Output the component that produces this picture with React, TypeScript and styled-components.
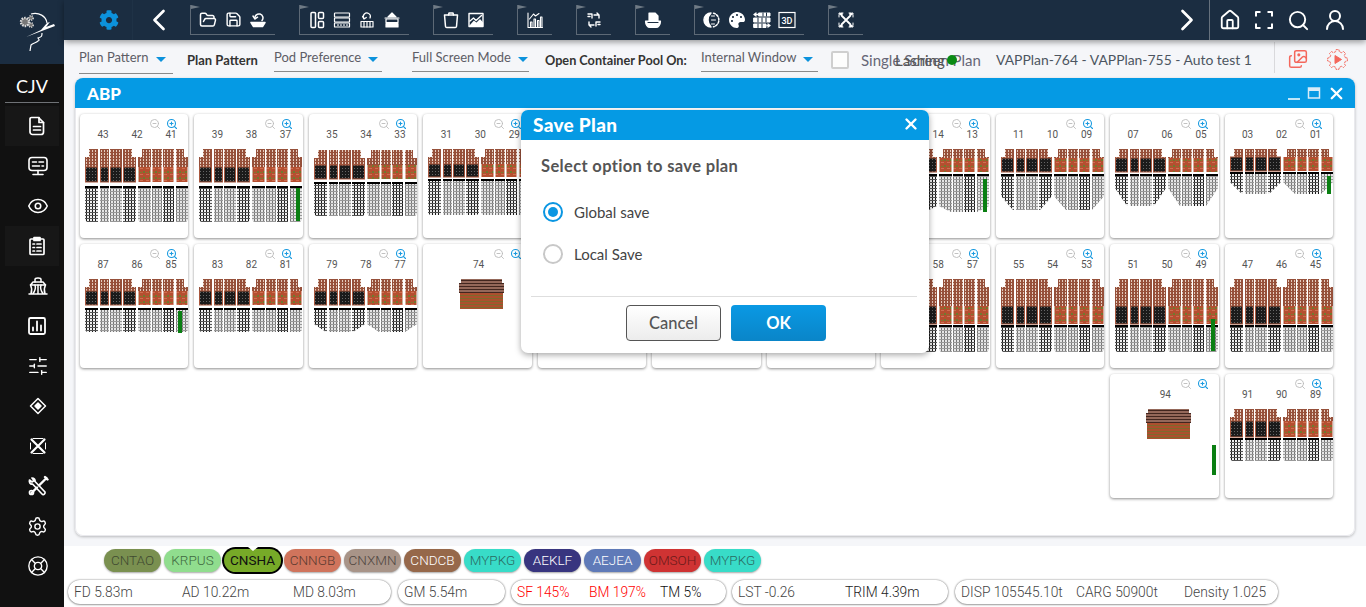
import React from "react";
import styled, { createGlobalStyle } from "styled-components";
import { ChevronLeft, ChevronRight, Eye, FolderOpen, Home, Images, LifeBuoy, Save, Search, Settings, SlidersHorizontal, UserRound, X, ZoomIn, ZoomOut } from "lucide-react";
import { FaCog, FaPalette } from "react-icons/fa";

const Global = createGlobalStyle`
  html, body { margin: 0; padding: 0; width: 1366px; height: 607px; overflow: hidden; background: #f5f6f9; }
  body { font-family: "Lato", "Open Sans", sans-serif; color: #555; }
  * { box-sizing: border-box; }
`;

const Page = styled.div`
  position: relative;
  display: flex;
  width: 1366px;
  height: 607px;
  overflow: hidden;
`;
const Sidebar = styled.aside`
  width: 64px;
  flex: none;
  background: #111;
  display: flex;
  flex-direction: column;
  align-items: stretch;
`;
const LogoBox = styled.div`
  height: 64px;
  background: #1b2d41;
  display: flex;
  align-items: center;
  justify-content: center;
  padding-left: 10px;
`;
const Vessel = styled.div`
  margin: 0 5px;
  height: 39px;
  border-bottom: 1px solid #6f7276;
  color: #fff;
  font-size: 18px;
  text-align: center;
  line-height: 45px;
`;
const SideItem = styled.div<{ $active?: boolean }>`
  height: 40px;
  margin: 0 5px;
  padding-left: 22px;
  display: flex;
  align-items: center;
  background: ${(p) => (p.$active ? "#171717" : "transparent")};
`;
const SideList = styled.nav`
  padding-top: 3px;
  display: flex;
  flex-direction: column;
`;
const Main = styled.main`
  flex: 1;
  min-width: 0;
  display: flex;
  flex-direction: column;
`;
const TopBar = styled.header`
  height: 40px;
  flex: none;
  background: #1b2d41;
  display: flex;
  align-items: center;
  box-shadow: 0 2px 6px rgba(0, 0, 0, .4);
  position: relative;
  z-index: 2;
`;
const GearSlot = styled.div`
  width: 69px;
  height: 40px;
  padding-left: 35px;
  display: flex;
  align-items: center;
  border-right: 1px solid #1f3246;
`;
const BackSlot = styled.div`
  width: 57px;
  padding-left: 8px;
  display: flex;
  align-items: center;
`;
const Groups = styled.div`
  display: flex;
  gap: 24px;
  align-self: flex-start;
  padding-top: 5px;
`;
const Group = styled.div`
  position: relative;
  height: 30px;
  padding: 0 8px 0 8px;
  display: flex;
  gap: 7px;
  align-items: center;
  border-left: 1px solid #5d6976;
  border-bottom: 1px solid #5d6976;
  &::before {
    content: "";
    position: absolute;
    left: 0;
    top: 0;
    border-left: 9px solid #6f7a85;
    border-top: 2.5px solid transparent;
    border-bottom: 2.5px solid transparent;
  }
`;
const IconSlot = styled.span`
  width: 18px;
  height: 18px;
  display: flex;
  align-items: center;
  justify-content: center;
`;
const TopRight = styled.div`
  margin-left: auto;
  display: flex;
  align-items: center;
  height: 40px;
`;
const ForwardSlot = styled.div`
  width: 40px;
  display: flex;
  align-items: center;
`;
const RightIcons = styled.div`
  height: 40px;
  width: 157px;
  padding-left: 9px;
  border-left: 1px solid #66717d;
  display: flex;
  align-items: center;
  gap: 13px;
`;
const SubBar = styled.div`
  height: 38px;
  flex: none;
  display: flex;
  align-items: flex-start;
  background: #f5f6f9;
`;
const Select = styled.div<{ $w: number; $ml: number; $tall?: boolean }>`
  width: ${(p) => p.$w}px;
  margin-left: ${(p) => p.$ml}px;
  margin-top: 7px;
  height: ${(p) => (p.$tall ? 27 : 25)}px;
  border-bottom: 1px solid #8a8a8a;
  font-size: 13px;
  line-height: 20px;
  color: #5d5d66;
  white-space: nowrap;
  display: flex;
  &::after {
    content: "";
    margin-left: 7px;
    margin-top: 10px;
    width: 0;
    height: 0;
    border-left: 5px solid transparent;
    border-right: 5px solid transparent;
    border-top: 5px solid #0c92dc;
  }
`;
const BoldLabel = styled.div<{ $ml: number; $w: number; $fs: number }>`
  margin-left: ${(p) => p.$ml}px;
  width: ${(p) => p.$w}px;
  margin-top: 11px;
  font-size: ${(p) => p.$fs}px;
  line-height: 18px;
  font-weight: 700;
  color: #333;
  white-space: nowrap;
`;
const Check = styled.div`
  width: 18px;
  height: 18px;
  margin-left: 13px;
  margin-top: 11px;
  border: 2px solid #cfcfcf;
  border-radius: 2px;
  background: #fdfdfd;
`;
const SinglePlan = styled.div`
  position: relative;
  width: 121px;
  margin-left: 12px;
  margin-top: 10px;
  font-size: 15px;
  line-height: 20px;
  color: #667;
  white-space: nowrap;
`;
const LashBadge = styled.div`
  position: absolute;
  left: 34px;
  top: 0;
  display: flex;
  align-items: center;
  gap: 1px;
  color: #555;
  font-size: 15px;
  &::after {
    content: "";
    width: 10px;
    height: 10px;
    border-radius: 50%;
    background: #0a8a14;
    margin-left: 1px;
  }
`;
const PlanName = styled.div`
  margin-left: 14px;
  margin-top: 10px;
  width: 278px;
  font-size: 13.9px;
  line-height: 20px;
  color: #4c5560;
  white-space: nowrap;
`;
const ActionBox = styled.div`
  height: 31px;
  margin-top: 2px;
  border-left: 1px solid #d9d9dc;
  padding: 7px 0 0 13px;
  display: flex;
  gap: 19px;
`;
const WindowArea = styled.div`
  flex: none;
  height: 468px;
  padding: 0 11px;
`;
const Win = styled.section`
  height: 458px;
  background: #fff;
  border-radius: 8px;
  box-shadow: 0 1px 3px rgba(0, 0, 0, .25), 0 0 0 1px #e9e9ed inset;
  overflow: hidden;
  display: flex;
  flex-direction: column;
`;
const WinHead = styled.div`
  height: 30px;
  flex: none;
  background: #059ae4;
  display: flex;
  align-items: center;
  justify-content: space-between;
  padding: 0 9px 0 12px;
  color: #fff;
  font-size: 17px;
  font-weight: 900;
`;
const WinControls = styled.div`
  display: flex;
  align-items: center;
  gap: 6px;
`;
const Bays = styled.div`
  display: grid;
  grid-template-columns: repeat(11, 1fr);
  grid-auto-rows: 124px;
  gap: 6px;
  width: 1258px;
  padding: 6px 0 0 5px;
`;
const Card = styled.article<{ $col?: number }>`
  position: relative;
  background: #fff;
  border-radius: 4px;
  box-shadow: 0 1px 3px rgba(0, 0, 0, .45);
  overflow: hidden;
  ${(p) => (p.$col ? `grid-column: ${p.$col};` : "")}
`;
const ZoomRow = styled.div`
  height: 15px;
  padding: 4px 10px 0 0;
  display: flex;
  justify-content: flex-end;
  gap: 5px;
`;
const Labels = styled.div<{ $single?: boolean }>`
  height: 11px;
  padding-left: ${(p) => (p.$single ? 2 : 6)}px;
  display: flex;
  justify-content: ${(p) => (p.$single ? "center" : "flex-start")};
  font-family: "Roboto", sans-serif;
  font-size: 10px;
  line-height: 11px;
  color: #555;
  span { width: 34px; text-align: center; }
`;
const Footer = styled.footer`
  flex: 1;
  background: #fff;
  position: relative;
  font-family: "Roboto", sans-serif;
`;
const Chips = styled.div`
  display: flex;
  gap: 3px;
  padding: 3px 0 0 40px;
  height: 34px;
`;
const Chip = styled.div<{ $bg: string; $fg: string; $on?: boolean }>`
  position: relative;
  width: 57px;
  height: 23px;
  border-radius: 12px;
  background: ${(p) => p.$bg};
  color: ${(p) => p.$fg};
  font-size: 13.5px;
  font-weight: ${(p) => (p.$on ? 400 : 300)};
  line-height: 23px;
  text-align: center;
  box-shadow: ${(p) => (p.$on ? "0 0 0 2px #000" : "0 1px 2px rgba(0,0,0,.35)")};
  white-space: nowrap;
  ${(p) =>
    p.$on
      ? `&::before { content: ""; position: absolute; left: 24px; top: -2px; border-left: 5px solid transparent; border-right: 5px solid transparent; border-top: 4px solid #fff; }`
      : ""}
`;
const Stats = styled.div`
  display: flex;
  padding-left: 4px;
`;
const Pill = styled.div<{ $w: number; $ml?: number }>`
  width: ${(p) => p.$w}px;
  margin-left: ${(p) => p.$ml ?? 0}px;
  height: 24px;
  border-radius: 12px;
  background: #fff;
  box-shadow: 0 0 2px rgba(0, 0, 0, .55), 0 1px 2px rgba(0, 0, 0, .25);
  padding-left: 6px;
  display: flex;
  align-items: center;
  font-size: 13.8px;
  font-weight: 300;
  color: #444;
  white-space: nowrap;
`;
const Stat = styled.span<{ $w: number; $c?: string }>`
  width: ${(p) => p.$w}px;
  color: ${(p) => p.$c ?? "inherit"};
`;
const Dialog = styled.div`
  position: absolute;
  left: 521px;
  top: 110px;
  width: 408px;
  height: 243px;
  background: #fff;
  border-radius: 7px;
  box-shadow: 0 2px 6px rgba(0, 0, 0, .35);
  overflow: hidden;
  z-index: 5;
`;
const DlgHead = styled.div`
  height: 30px;
  background: #059ae4;
  color: #fff;
  padding: 0 9px 2px 12px;
  display: flex;
  align-items: center;
  justify-content: space-between;
  font-size: 19px;
  font-weight: 900;
  letter-spacing: .3px;
`;
const DlgTitle = styled.div`
  padding: 16px 0 0 20px;
  height: 51px;
  font-size: 16.5px;
  line-height: 20px;
  font-weight: 700;
  letter-spacing: .35px;
  color: #555;
  white-space: nowrap;
`;
const RadioRow = styled.label`
  display: flex;
  align-items: center;
  gap: 11px;
  height: 42px;
  padding-left: 22px;
  font-size: 15px;
  color: #444;
`;
const RadioDot = styled.span<{ $on?: boolean }>`
  width: 20px;
  height: 20px;
  border-radius: 50%;
  border: 2px solid ${(p) => (p.$on ? "#0a96e2" : "#c8c8c8")};
  display: flex;
  align-items: center;
  justify-content: center;
  &::after {
    content: "";
    width: 10px;
    height: 10px;
    border-radius: 50%;
    background: ${(p) => (p.$on ? "#0a96e2" : "transparent")};
  }
`;
const DlgFoot = styled.div`
  margin: 21px 12px 0 10px;
  border-top: 1px solid #dedede;
  padding: 8px 0 0 95px;
  display: flex;
  gap: 10px;
`;
const Btn = styled.button<{ $primary?: boolean }>`
  width: 95px;
  height: 36px;
  border-radius: 4px;
  font-family: inherit;
  font-size: 16.5px;
  font-weight: ${(p) => (p.$primary ? 700 : 500)};
  color: ${(p) => (p.$primary ? "#fff" : "#555")};
  border: ${(p) => (p.$primary ? "0" : "1px solid #555")};
  background: ${(p) => (p.$primary ? "linear-gradient(#0a99e4,#0a85c8)" : "linear-gradient(#fff,#ececec)")};
`;

/* ---------- icons ---------- */
const Svg: React.FC<{ s?: number; v?: number; sw?: number; c?: string; children: React.ReactNode }> = ({ s = 18, v = 18, sw = 1.5, c = "#fff", children }) => (
  <svg width={s} height={s} viewBox={`0 0 ${v} ${v}`} fill="none" stroke={c} strokeWidth={sw} strokeLinecap="round" strokeLinejoin="round">{children}</svg>
);

const topIcons: Record<string, React.ReactNode> = {
  open: <FolderOpen size={18} color="#fff" strokeWidth={2} />,
  save: <Save size={17} color="#fff" strokeWidth={2} />,
  shipUndo: <Svg><path d="M6 7.500A4 4 0 1 1 13 9.500" /><path d="M4 5 6 8l2.500-1.800" /><path d="M2 11.500h14l-2.500 4h-9z" fill="#fff" /></Svg>,
  layout: <Svg><rect x="3" y="1.500" width="4.500" height="15" rx="1" /><rect x="10.500" y="1.500" width="5" height="6" rx="1" /><rect x="10.500" y="10.500" width="5" height="6" rx="1" /></Svg>,
  rows: <Svg sw={1.200}><rect x="1.500" y="2" width="15" height="4" rx=".6" /><rect x="1.500" y="7" width="15" height="4" rx=".6" /><rect x="1.500" y="12" width="15" height="4" rx=".6" /><path d="M5 13.500v1M8 13.500v1M11 13.500v1M14 13.500v1" /></Svg>,
  undoGrid: <Svg sw={1.200}><path d="M6 7.500A3.500 3.500 0 1 1 12 7" /><path d="M4.500 5.500 6 8l2.300-1.600" /><rect x="3" y="10.500" width="12" height="5.500" /><path d="M6 10.500v5.500M9 10.500v5.500M12 10.500v5.500" /></Svg>,
  stack: <Svg sw={1.200}><path d="M9 2 13 6H5z" fill="#fff" /><rect x="3" y="8" width="12" height="3.500" /><rect x="3" y="12.500" width="12" height="3.500" fill="#fff" /><path d="M2 7h14" /></Svg>,
  bucket: <Svg><path d="M2.500 4h13l-1 11.500a1.200 1.200 0 0 1-1.200 1H4.700a1.200 1.200 0 0 1-1.200-1z" /><path d="M6.500 4 7 2h4l.5 2" /></Svg>,
  imgChart: <Svg sw={1.400}><rect x="2" y="2.500" width="14" height="13" /><path d="m3 10 3.500-3 2.500 2.500 5.500-5" /><path d="M3 15 7 10.500l2.500 2 3.500-3.500 2.500 3v3z" fill="#fff" /></Svg>,
  barArrow: <Svg sw={1.100}><path d="M2 2v14.500h14.500" /><path d="M4.500 15.500V11h1.500v4.500M8 15.500V8h1.500v7.500M11.500 15.500V9.500H13v6M14.500 15.500V6H16v9.500" /><path d="m3.500 8 4-5 2 2L13 2.500" /></Svg>,
  transfer: <Svg sw={1.400}><path d="M3 3h4v4M3 5.500h2" /><path d="M9 4h5l-2-2M14 4v3" /><path d="M15 11h-4v4M15 13.500h-2" /><path d="M9 14H4l2 2M4 14v-3" /></Svg>,
  docShip: <Svg sw={1.200}><path d="M5 2h6l3 3v5H5z" fill="#fff" /><path d="M1.500 10h15c0 3.500-2 6.500-4.500 6.500H6c-2.500 0-4.500-3-4.500-6.500z" fill="#fff" /><path d="M4 11.500h10" stroke="#1b2d41" /></Svg>,
  half: <Svg sw={1.500}><path d="M8 2a7 7 0 0 0 0 14c-2-2-3-4.500-3-7s1-5 3-7z" fill="#fff" /><path d="M10.500 2.200a7 7 0 0 1 0 13.600" strokeDasharray="2 1.500" /><path d="M8.500 5h3M8.500 9h4M8.500 13h3" strokeWidth={1} /></Svg>,
  palette: <FaPalette size={16} color="#fff" />,
  grid: <Svg sw={1}><path d="M6 2h11v3H6zM1 7h16v4H1zM1 13h12v3.500H1z" fill="#fff" /><path d="M1 3.500h4M3 2 1 3.500 3 5M17 14.500h-3M15 13l2 1.500L15 16" strokeWidth={1.300} /><path d="M5 7v4M9 7v4M13 7v4M5 13v3.500M9 13v3.500M10 2v3M13.500 2v3" stroke="#1b2d41" /></Svg>,
  td: <svg width="18" height="18" viewBox="0 0 18 18"><rect x="1" y="1.500" width="16" height="15" fill="none" stroke="#fff" strokeWidth="1.200" /><text x="9" y="12.500" textAnchor="middle" fontSize="9" fontFamily="Roboto, sans-serif" fontWeight="500" fill="#fff">3D</text></svg>,
  cross: <Svg sw={1.300}><path d="M4.500 4.500l9 9M13.500 4.500l-9 9" strokeWidth={1.800} /><path d="M2 6V2h4M12 2h4v4M2 12v4h4M12 16h4v-4" strokeWidth={1} strokeDasharray="2 1" /><path d="M3 3h2M13 3h2M3 15h2M13 15h2" strokeWidth={1.800} /></Svg>,
};

const gearPath = (cx: number, cy: number, r1: number, r2: number, n: number) => {
  const pts: string[] = [];
  for (let i = 0; i < n; i++) {
    const a = (i / n) * Math.PI * 2;
    const st = (Math.PI * 2) / n;
    [[-0.3, r1], [-0.18, r2], [0.18, r2], [0.3, r1]].forEach(([o, r]) => {
      const b = a + o * st;
      pts.push(`${(cx + Math.cos(b) * r).toFixed(2)} ${(cy + Math.sin(b) * r).toFixed(2)}`);
    });
  }
  return `M${pts.join("L")}Z`;
};

const PlayGear = () => (
  <svg width="21" height="21" viewBox="0 0 21 21" fill="none" stroke="#f4675c" strokeWidth="1" strokeLinejoin="round">
    <path d={gearPath(10.5, 10.5, 8, 10, 8)} strokeDasharray="2.500 .8" />
    <path d="M8 6.500v8l6.500-4z" fill="#f4675c" />
  </svg>
);

const Logo = () => (
  <svg width="40" height="42" viewBox="0 0 40 42" fill="none">
    <circle cx="8" cy="11" r="4" fill="#777" stroke="#ddd" strokeWidth="2.400" strokeDasharray="1.500 1" />
    <circle cx="14" cy="7" r="2.200" fill="#777" stroke="#ddd" strokeWidth="1.500" strokeDasharray="1 1" />
    <circle cx="14" cy="14" r="2.200" fill="#777" stroke="#ddd" strokeWidth="1.500" strokeDasharray="1 1" />
    <path d="M14 3c8-2 15 2 16 9M25 22c0 3 0 4-4 5 1 2 2 2 0 3-2 2-5 2-7 4l-1 6" stroke="#fff" strokeWidth="1.200" />
    <path d="M9 26 38 15l-1-2-8 3c1-1 3-4 4-5l-3 1-6 7z" fill="#fff" />
  </svg>
);

const sideIcons: React.ReactNode[] = [
  <Svg s={20} v={20} sw={1.700}><path d="M4.500 1.500h7l5 5V16a2.500 2.500 0 0 1-2.500 2.500H5.500A2.500 2.500 0 0 1 3 16V3a1.500 1.500 0 0 1 1.500-1.500z" /><path d="M12 1.500v5h4.500M6.500 10.500h7M6.500 14h7" /></Svg>,
  <Svg s={22} v={22} sw={1.600}><rect x="2" y="2.500" width="18" height="13" rx="3" /><path d="M5.500 7h4M12 7h4.500M5.500 11h7M15 11h1.500M11 15.500v3M6 19.500h10" /></Svg>,
  <Eye size={22} color="#fff" strokeWidth={1.700} />,
  <Svg s={20} v={20} sw={1.700}><rect x="3" y="3" width="14" height="15.500" rx="1" /><rect x="7" y="1.500" width="6" height="3" fill="#fff" /><path d="M6 8h1.500M10 8h4M6 11.500h1.500M10 11.500h4M6 15h1.500M10 15h4" /></Svg>,
  <Svg s={22} v={22} sw={1.500}><path d="M8 7V4.500C8 2.500 14 2.500 14 4.500V7" /><path d="M3.500 10 6 7h10l2.500 3z" /><path d="M2 19h18M3.500 10c1.500 3 1.500 6 .5 8.500M18.500 10c-1.500 3-1.500 6-.5 8.500M11 10v8.500M8 10c1 3 0 6-2 8.500M14 10c-1 3 0 6 2 8.500" /></Svg>,
  <Svg s={20} v={20} sw={1.800}><rect x="2" y="2" width="16" height="16" rx="1.500" /><path d="M6 14.500v-3M10 14.500v-9M14 14.500v-5" /></Svg>,
  <SlidersHorizontal size={22} color="#fff" strokeWidth={1.500} />,
  <Svg s={22} v={22} sw={1.500}><path d="M11 3.500 18.500 11 11 18.500 3.500 11z" /><path d="M11 8 14 11 11 14 8 11z" fill="#fff" /></Svg>,
  <Svg s={22} v={22} sw={1.600}>
    <path d="M4.500 4.500 17.500 17.500M17.500 4.500 4.500 17.500" strokeWidth={2.200} />
    <path d="M6 3.500h10M6 18.500h10M3.500 8v6M18.500 8v6" strokeWidth={1} />
  </Svg>,
  <Svg s={22} v={22} sw={1.700}>
    <path d="M5 3c2 0 3.500 1.500 3 3.500L18 17a2 2 0 0 1-2.500 2.500L5.500 9C3 9.500 2 7 2.500 5l2.500 2 2-1.500z" />
    <path d="M19.500 3 12 10.500M18 2l2.500 2.500M10 12.500 4.500 18" strokeWidth={2.400} />
    <circle cx="4.500" cy="17.500" r="2" />
  </Svg>,
  <Settings size={21} color="#fff" strokeWidth={1.600} />,
  <LifeBuoy size={22} color="#fff" strokeWidth={1.500} />,
];

/* ---------- bay drawings ---------- */
type Cfg = { top: number; black: number; bottom: number; lowTop: number; lowBottom: number; taper?: number; bar?: [number, number, number]; block?: boolean };
const stacks: [number, number][] = [[5, 13], [20, 9], [30, 12], [43, 13], [58, 13], [72, 10], [83, 11], [96, 12]];

const hull = (x0: number, x1: number, t: number, b: number, taper: number) => {
  const cut = Math.max(taper, 2);
  const inset = taper ? 12 : 2;
  return `${x0},${t} ${x1},${t} ${x1},${b - cut} ${x1 - inset},${b} ${x0 + inset},${b} ${x0},${b - cut}`;
};

const Bay: React.FC<{ id: string; cfg: Cfg }> = ({ id, cfg }) => {
  const { top, black, bottom, lowTop, lowBottom, taper = 0, bar, block } = cfg;
  return (
    <svg width="108" height="98" viewBox="0 26 108 98">
      <defs>
        <pattern id={`${id}u`} width="3" height="3" patternUnits="userSpaceOnUse"><rect width="3" height="3" fill="#96503a" /><rect width="1" height="2" fill="#e4cabc" /></pattern>
        <pattern id={`${id}k`} width="3" height="3" patternUnits="userSpaceOnUse"><rect width="3" height="3" fill="#1b1b1b" /><rect width="1" height="1" fill="#666" /></pattern>
        <pattern id={`${id}o`} width="6" height="6" patternUnits="userSpaceOnUse"><rect width="6" height="6" fill="#b54f30" /><rect width="3" height="1" fill="#cf6f52" /><rect x="3" y="3" width="2" height="2" fill="#6f7a30" /><rect x="0" y="4" width="2" height="1" fill="#7f7a30" /></pattern>
        <pattern id={`${id}d`} width="3" height="3" patternUnits="userSpaceOnUse"><rect width="3" height="3" fill="#f0f0f0" /><rect width="1" height="3" fill="#1a1a1a" /><rect y="2" width="3" height="1" fill="#555" /></pattern>
        <pattern id={`${id}g`} width="3" height="3" patternUnits="userSpaceOnUse"><rect width="3" height="3" fill="#e6e6e6" /><rect width="1" height="3" fill="#777" /><rect y="2" width="3" height="1" fill="#999" /></pattern>
        <pattern id={`${id}s`} width="4" height="3" patternUnits="userSpaceOnUse"><rect width="4" height="3" fill="#94685a" /><rect width="4" height="1" fill="#42261f" /></pattern>
        <pattern id={`${id}b`} width="5" height="3" patternUnits="userSpaceOnUse"><rect width="5" height="3" fill="#ad4f2e" /><rect width="5" height="1" fill="#7e6a2c" /></pattern>
        <clipPath id={`${id}l`}><polygon points={hull(5, 56, lowTop, lowBottom, taper)} /></clipPath>
        <clipPath id={`${id}r`}><polygon points={hull(58, 108, lowTop, lowBottom, taper)} /></clipPath>
      </defs>
      {block ? (
        <>
          <rect x="38" y={top} width="41" height="4" fill={`url(#${id}s)`} />
          <rect x="36" y={top + 4} width="45" height="10" fill={`url(#${id}s)`} />
          <rect x="37" y={top + 14} width="43" height={bottom - top - 14} fill={`url(#${id}b)`} />
        </>
      ) : (
        stacks.map(([x, w], i) => {
          const leftStep = i === 0 || i === 4;
          const rightStep = i === 3 || i === 7;
          const outer = leftStep || rightStep;
          return (
            <g key={i}>
              <rect x={leftStep ? x + 4 : x} y={top} width={outer ? w - 4 : w} height={8} fill={`url(#${id}u)`} />
              <rect x={x} y={top + 8} width={w} height={black - top - 8} fill={`url(#${id}u)`} />
              <rect x={x + 0.5} y={black} width={w - 1} height={bottom - black} fill={`url(#${id}${i < 4 ? "k" : "o"})`} stroke={i < 4 ? "#a8583f" : "none"} strokeWidth="1" />
              <rect x={x} y={lowTop - 2} width={w} height="2" fill="#000" />
              <rect x={x} y={lowTop} width={w} height={lowBottom - lowTop} fill={`url(#${id}${i % 3 === 0 ? "d" : "g"})`} clipPath={`url(#${id}${i < 4 ? "l" : "r"})`} />
            </g>
          );
        })
      )}
      {bar ? <rect x={bar[0]} y={bar[1]} width="4" height={bar[2]} fill="#0a7f12" /> : null}
    </svg>
  );
};

const tall: Cfg = { top: 35, black: 53, bottom: 68, lowTop: 74, lowBottom: 108 };
const full: Cfg = { top: 35, black: 62, bottom: 80, lowTop: 83, lowBottom: 108 };
const mid: Cfg = { top: 35, black: 47, bottom: 61, lowTop: 66, lowBottom: 88 };
const block: Cfg = { top: 35, black: 0, bottom: 65, lowTop: 0, lowBottom: 0, block: true };

const cards: { labels: string[]; cfg: Cfg; col?: number }[] = [
  { labels: ["43", "42", "41"], cfg: tall },
  { labels: ["39", "38", "37"], cfg: { ...tall, bar: [102, 74, 33] } },
  { labels: ["35", "34", "33"], cfg: { top: 36, black: 51, bottom: 65, lowTop: 70, lowBottom: 102 } },
  { labels: ["31", "30", "29"], cfg: { top: 35, black: 50, bottom: 63, lowTop: 67, lowBottom: 101 } },
  { labels: ["27", "26", "25"], cfg: { top: 35, black: 48, bottom: 60, lowTop: 64, lowBottom: 98 } },
  { labels: ["23", "22", "21"], cfg: { top: 35, black: 48, bottom: 60, lowTop: 64, lowBottom: 98 } },
  { labels: ["19", "18", "17"], cfg: { top: 35, black: 48, bottom: 60, lowTop: 64, lowBottom: 98 } },
  { labels: ["15", "14", "13"], cfg: { top: 35, black: 44, bottom: 58, lowTop: 62, lowBottom: 98, taper: 6, bar: [102, 65, 33] } },
  { labels: ["11", "10", "09"], cfg: { top: 35, black: 44, bottom: 58, lowTop: 62, lowBottom: 96, taper: 14 } },
  { labels: ["07", "06", "05"], cfg: { top: 35, black: 44, bottom: 58, lowTop: 62, lowBottom: 92, taper: 18 } },
  { labels: ["03", "02", "01"], cfg: { top: 35, black: 43, bottom: 57, lowTop: 60, lowBottom: 80, taper: 12, bar: [102, 62, 18] } },
  { labels: ["87", "86", "85"], cfg: { ...mid, bar: [98, 67, 22] } },
  { labels: ["83", "82", "81"], cfg: mid },
  { labels: ["79", "78", "77"], cfg: { ...mid, taper: 8 } },
  { labels: ["74"], cfg: block },
  { labels: ["71", "70", "69"], cfg: full },
  { labels: ["67", "66", "65"], cfg: full },
  { labels: ["63", "62", "61"], cfg: full },
  { labels: ["59", "58", "57"], cfg: full },
  { labels: ["55", "54", "53"], cfg: full },
  { labels: ["51", "50", "49"], cfg: { ...full, bar: [101, 75, 32] } },
  { labels: ["47", "46", "45"], cfg: full },
  { labels: ["94"], cfg: { ...block, bar: [102, 71, 30] }, col: 10 },
  { labels: ["91", "90", "89"], cfg: { top: 35, black: 47, bottom: 63, lowTop: 66, lowBottom: 87 } },
];

const chips: { t: string; bg: string; fg: string; on?: boolean }[] = [
  { t: "CNTAO", bg: "#7a9050", fg: "#3f4a30" },
  { t: "KRPUS", bg: "#90dd8e", fg: "#3f6a40" },
  { t: "CNSHA", bg: "#77aa28", fg: "#111", on: true },
  { t: "CNNGB", bg: "#d0745c", fg: "#5a3a30" },
  { t: "CNXMN", bg: "#a89488", fg: "#4f4640" },
  { t: "CNDCB", bg: "#96684a", fg: "#fff" },
  { t: "MYPKG", bg: "#38dcc8", fg: "#2a6a60" },
  { t: "AEKLF", bg: "#38357f", fg: "#fff" },
  { t: "AEJEA", bg: "#5f7ab8", fg: "#fff" },
  { t: "OMSOH", bg: "#cf3333", fg: "#6a1a1a" },
  { t: "MYPKG", bg: "#38dcc8", fg: "#2a6a60" },
];

const groups = [
  ["open", "save", "shipUndo"],
  ["layout", "rows", "undoGrid", "stack"],
  ["bucket", "imgChart"],
  ["barArrow"],
  ["transfer"],
  ["docShip"],
  ["half", "palette", "grid", "td"],
  ["cross"],
];

export default function App() {
  return (
    <Page>
      <Global />
      <Sidebar>
        <LogoBox><Logo /></LogoBox>
        <Vessel>CJV</Vessel>
        <SideList>
          {sideIcons.map((ic, i) => (
            <SideItem key={i} $active={i === 0 || i === 3}>{ic}</SideItem>
          ))}
        </SideList>
      </Sidebar>
      <Main>
        <TopBar>
          <GearSlot><FaCog size={20} color="#0c92dc" /></GearSlot>
          <BackSlot><ChevronLeft size={36} color="#fff" strokeWidth={1.800} /></BackSlot>
          <Groups>
            {groups.map((g, i) => (
              <Group key={i}>
                {g.map((n) => <IconSlot key={n}>{topIcons[n]}</IconSlot>)}
              </Group>
            ))}
          </Groups>
          <TopRight>
            <ForwardSlot><ChevronRight size={36} color="#fff" strokeWidth={1.800} /></ForwardSlot>
            <RightIcons>
              <Home size={22} color="#fff" strokeWidth={2} />
              <Svg s={20} v={20} sw={2}><path d="M2 6.500V2h4.500M13.500 2H18v4.500M2 13.500V18h4.500M13.500 18H18v-4.500" strokeLinecap="butt" /></Svg>
              <Search size={23} color="#fff" strokeWidth={2} />
              <UserRound size={24} color="#fff" strokeWidth={2} />
            </RightIcons>
          </TopRight>
        </TopBar>
        <SubBar>
          <Select $w={94} $ml={15} $tall>Plan Pattern</Select>
          <BoldLabel $ml={14} $w={72} $fs={13}>Plan Pattern</BoldLabel>
          <Select $w={108} $ml={15}>Pod Preference</Select>
          <Select $w={117} $ml={30}>Full Screen Mode</Select>
          <BoldLabel $ml={16} $w={142} $fs={12.7}>Open Container Pool On:</BoldLabel>
          <Select $w={117} $ml={14}>Internal Window</Select>
          <Check />
          <SinglePlan>
            Single Screen Plan
            <LashBadge>Lashing</LashBadge>
          </SinglePlan>
          <PlanName>VAPPlan-764 - VAPPlan-755 - Auto test 1</PlanName>
          <ActionBox>
            <Images size={20} color="#f4675c" strokeWidth={1.800} />
            <PlayGear />
          </ActionBox>
        </SubBar>
        <WindowArea>
          <Win>
            <WinHead>
              ABP
              <WinControls>
                <Svg s={14} v={14} sw={1.500}><path d="M1 13h12" strokeLinecap="butt" /></Svg>
                <svg width="14" height="14" viewBox="0 0 14 14" fill="none" stroke="#d8ecf8" strokeWidth="1.500"><rect x="1.500" y="2" width="11" height="10" /><path d="M1 3.500h12" strokeWidth="3" /></svg>
                <X size={19} color="#fff" strokeWidth={3} />
              </WinControls>
            </WinHead>
            <Bays>
              {cards.map((c, i) => (
                <Card key={i} $col={c.col}>
                  <ZoomRow>
                    <ZoomOut size={12} color="#bbb" strokeWidth={1.800} />
                    <ZoomIn size={12} color="#1a9be0" strokeWidth={2.200} />
                  </ZoomRow>
                  <Labels $single={c.labels.length === 1}>
                    {c.labels.map((l) => <span key={l}>{l}</span>)}
                  </Labels>
                  <Bay id={`b${i}`} cfg={c.cfg} />
                </Card>
              ))}
            </Bays>
          </Win>
        </WindowArea>
        <Footer>
          <Chips>
            {chips.map((c, i) => (
              <Chip key={i} $bg={c.bg} $fg={c.fg} $on={c.on}>{c.t}</Chip>
            ))}
          </Chips>
          <Stats>
            <Pill $w={323}><Stat $w={108}>FD 5.83m</Stat><Stat $w={111}>AD 10.22m</Stat><Stat $w={90}>MD 8.03m</Stat></Pill>
            <Pill $w={107} $ml={7}><Stat $w={90}>GM 5.54m</Stat></Pill>
            <Pill $w={215} $ml={6}><Stat $w={72} $c="#f00">SF 145%</Stat><Stat $w={71} $c="#f00">BM 197%</Stat><Stat $w={50} $c="#111">TM 5%</Stat></Pill>
            <Pill $w={216} $ml={6}><Stat $w={107}>LST -0.26</Stat><Stat $w={90} $c="#222">TRIM 4.39m</Stat></Pill>
            <Pill $w={323} $ml={7}><Stat $w={115}>DISP 105545.10t</Stat><Stat $w={108}>CARG 50900t</Stat><Stat $w={90}>Density 1.025</Stat></Pill>
          </Stats>
        </Footer>
      </Main>
      <Dialog>
        <DlgHead>
          Save Plan
          <X size={18} color="#fff" strokeWidth={3.200} />
        </DlgHead>
        <DlgTitle>Select option to save plan</DlgTitle>
        <RadioRow><RadioDot $on />Global save</RadioRow>
        <RadioRow><RadioDot />Local Save</RadioRow>
        <DlgFoot>
          <Btn>Cancel</Btn>
          <Btn $primary>OK</Btn>
        </DlgFoot>
      </Dialog>
    </Page>
  );
}
